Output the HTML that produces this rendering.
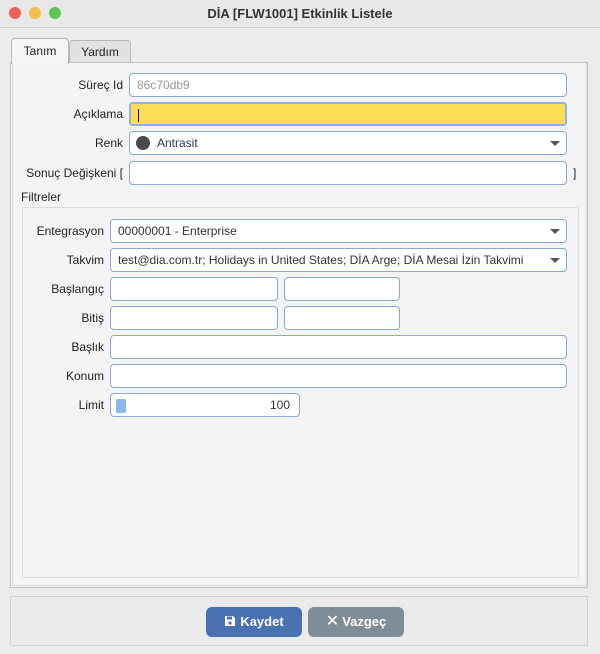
<!DOCTYPE html>
<html><head><meta charset="utf-8"><style>
*{box-sizing:border-box;margin:0;padding:0}
body{width:600px;height:654px;background:#ececec;font-family:"Liberation Sans","DejaVu Sans",sans-serif;font-size:12px;color:#222;position:relative;overflow:hidden}
.abs{position:absolute}
.title{left:0;top:0;width:600px;height:28px;text-align:center;font-weight:bold;font-size:13px;line-height:27px;color:#333;border-bottom:1px solid #d0d0d0;background:#e8e8e8}
.dot{width:12px;height:12px;border-radius:50%;top:7px}
.tab{height:25px;border:1px solid #b8b8b8;border-bottom:none;border-radius:4px 4px 0 0;text-align:center;line-height:24px;font-size:12px}
.inp{background:#fff;border:1px solid #8aa8d8;border-radius:4px;height:24px;line-height:22px;padding-left:7px;font-size:12px;color:#333;white-space:nowrap;overflow:hidden}
.lbl{text-align:right;font-size:12px;line-height:24px;color:#222}
.arr{position:absolute;right:6px;top:9px;width:0;height:0;border-left:5px solid transparent;border-right:5px solid transparent;border-top:5px solid #555}
.btn{height:30px;border-radius:6px;color:#fff;font-weight:bold;font-size:13px;line-height:30px;text-align:center}
</style></head><body>
<div class="abs title">DİA [FLW1001] Etkinlik Listele</div>
<div class="abs dot" style="left:9px;background:#ee5f58"></div>
<div class="abs dot" style="left:29px;background:#f6be4f"></div>
<div class="abs dot" style="left:49px;background:#5fc454"></div>

<div class="abs" style="left:10px;top:62px;width:578px;height:526px;border:1px solid #c4c4c4;background:#f4f4f4"></div>
<div class="abs tab" style="left:11px;top:38px;width:58px;background:#f6f6f6;height:26px">Tanım</div>
<div class="abs tab" style="left:69px;top:40px;width:62px;background:#e2e2e2;height:22px;line-height:22px">Yardım</div>
<div class="abs" style="left:12px;top:63px;width:575px;height:523px;border:1px solid #dadada;border-top:none"></div>

<div class="abs lbl" style="left:20px;top:73px;width:103px">Süreç Id</div>
<div class="abs inp" style="left:129px;top:73px;width:438px;color:#999">86c70db9</div>
<div class="abs lbl" style="left:20px;top:102px;width:103px">Açıklama</div>
<div class="abs inp" style="left:129px;top:102px;width:438px;background:#fedd56;border:2px solid #8fb0e8;padding-left:7px"><span style="display:inline-block;width:1px;height:13px;background:#113;vertical-align:middle"></span></div>
<div class="abs lbl" style="left:20px;top:131px;width:103px">Renk</div>
<div class="abs inp" style="left:129px;top:131px;width:438px;color:#2a3a55"><span style="display:inline-block;width:14px;height:14px;border-radius:50%;background:#4a4a4a;vertical-align:-3px;margin-right:7px;margin-left:-1px"></span>Antrasit<div class="arr"></div></div>
<div class="abs lbl" style="left:10px;top:161px;width:113px">Sonuç Değişkeni [</div>
<div class="abs inp" style="left:129px;top:161px;width:438px"></div>
<div class="abs lbl" style="left:573px;top:161px">]</div>
<div class="abs" style="left:21px;top:190px;font-size:12px">Filtreler</div>

<div class="abs" style="left:22px;top:207px;width:557px;height:371px;border:1px solid #dcdcdc;border-radius:2px"></div>

<div class="abs lbl" style="left:20px;top:219px;width:84px">Entegrasyon</div>
<div class="abs inp" style="left:110px;top:219px;width:457px">00000001 - Enterprise<div class="arr"></div></div>
<div class="abs lbl" style="left:20px;top:248px;width:84px">Takvim</div>
<div class="abs inp" style="left:110px;top:248px;width:457px;padding-right:20px">test@dia.com.tr; Holidays in United States; DİA Arge; DİA Mesai İzin Takvimi<div class="arr"></div></div>
<div class="abs lbl" style="left:20px;top:277px;width:84px">Başlangıç</div>
<div class="abs inp" style="left:110px;top:277px;width:168px"></div>
<div class="abs inp" style="left:284px;top:277px;width:116px"></div>
<div class="abs lbl" style="left:20px;top:306px;width:84px">Bitiş</div>
<div class="abs inp" style="left:110px;top:306px;width:168px"></div>
<div class="abs inp" style="left:284px;top:306px;width:116px"></div>
<div class="abs lbl" style="left:20px;top:335px;width:84px">Başlık</div>
<div class="abs inp" style="left:110px;top:335px;width:457px"></div>
<div class="abs lbl" style="left:20px;top:364px;width:84px">Konum</div>
<div class="abs inp" style="left:110px;top:364px;width:457px"></div>
<div class="abs lbl" style="left:20px;top:393px;width:84px">Limit</div>
<div class="abs inp" style="left:110px;top:393px;width:190px;text-align:right;padding-right:9px">100<div style="position:absolute;left:5px;top:5px;width:10px;height:14px;background:#8ab8e8;border-radius:2px"></div></div>

<div class="abs" style="left:10px;top:596px;width:578px;height:50px;border:1px solid #d2d2d2;background:#ebebeb"></div>
<div class="abs btn" style="left:206px;top:607px;width:96px;background:#4a72b2"><svg width="12" height="12" viewBox="0 0 12 12" style="vertical-align:-1px;margin-right:4px"><path d="M1 1h8l2 2v8H1z" fill="#fff"/><rect x="3" y="1.5" width="5" height="3" fill="#4a72b2"/><circle cx="6" cy="8" r="1.6" fill="#4a72b2"/></svg>Kaydet</div>
<div class="abs btn" style="left:308px;top:607px;width:96px;background:#7f8e96"><span style="font-weight:normal;font-size:16px;margin-right:3px">✕</span>Vazgeç</div>
</body></html>
